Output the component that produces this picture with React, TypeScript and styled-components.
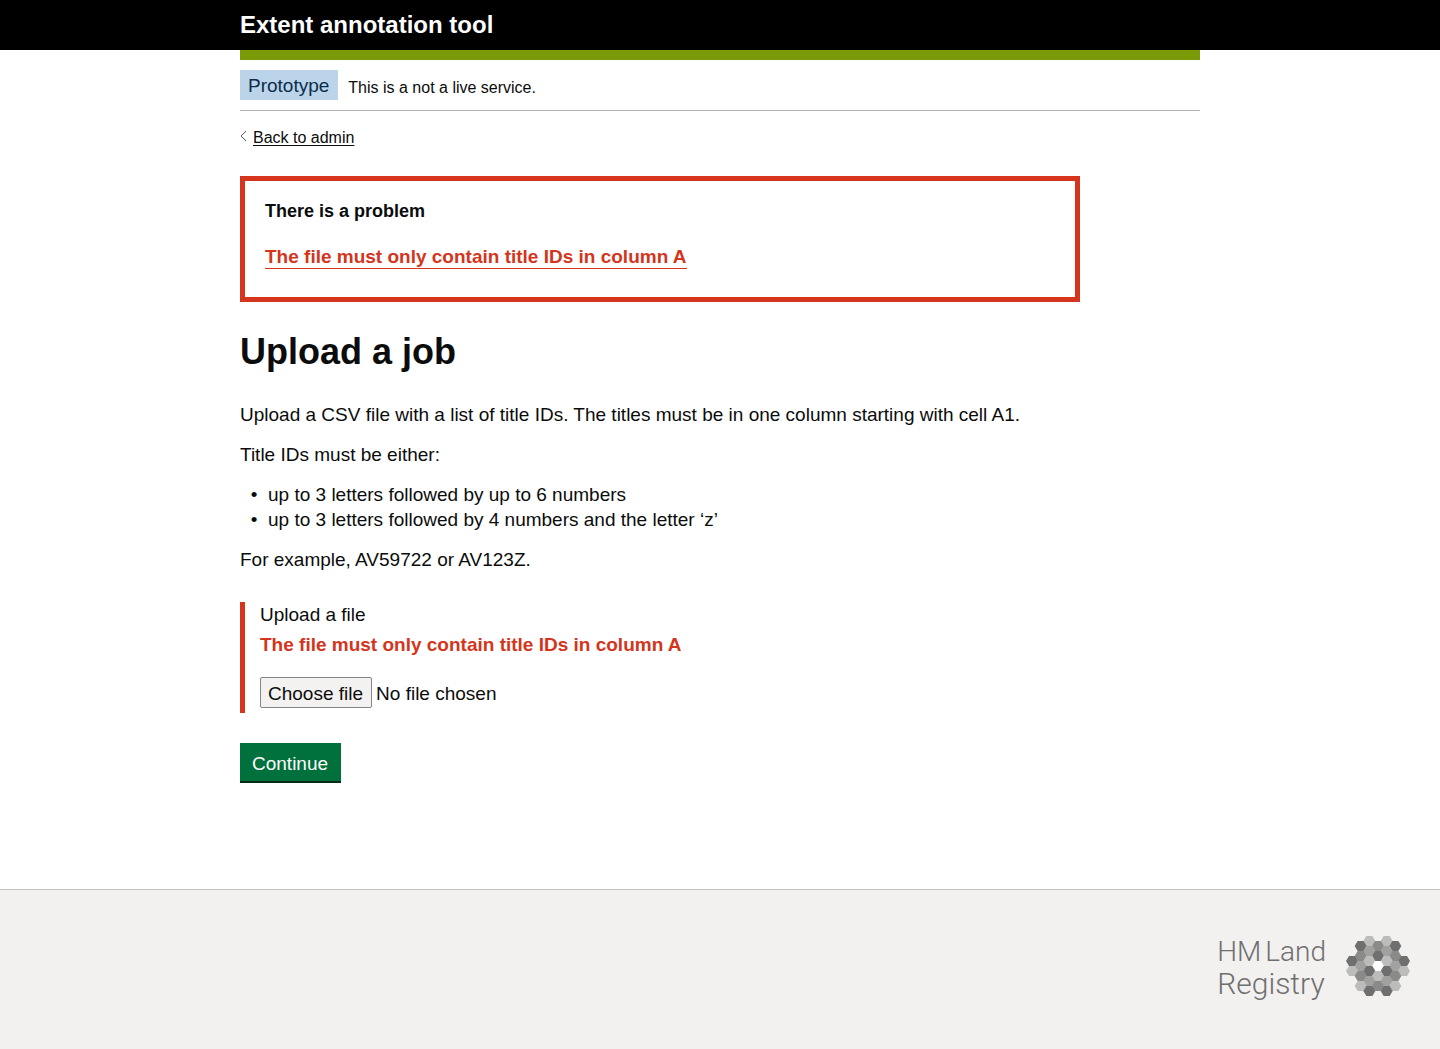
import React, { useState } from 'react';
import styled, { createGlobalStyle } from 'styled-components';

const RED = '#d4351c';
const INK = '#0b0c0c';

const GlobalStyle = createGlobalStyle`
  * { box-sizing: border-box; }
  body {
    margin: 0;
    background: #fff;
    color: ${INK};
    font-family: "Liberation Sans", Arial, sans-serif;
    font-size: 19px;
    line-height: 25px;
  }
`;

const Page = styled.div`
  display: flex;
  flex-direction: column;
  min-height: 100vh;
`;

const Container = styled.div`
  width: 100%;
  max-width: 1020px;
  margin: 0 auto;
  padding: 0 30px;
`;

const Header = styled.header`
  background: #000;
  color: #fff;
`;

const ServiceName = styled.div`
  padding: 10px 0;
  font-size: 24px;
  line-height: 30px;
  font-weight: 700;
`;

const AccentBar = styled.div`
  height: 10px;
  background: #7a9a08;
`;

const PhaseBanner = styled.div`
  display: flex;
  align-items: center;
  gap: 10px;
  padding: 10px 0;
  border-bottom: 1px solid #b1b4b6;
`;

const Tag = styled.strong`
  padding: 3px 9px 2px 8px;
  background: #bbd4ea;
  color: #0c2d4a;
  font-weight: 400;
`;

const PhaseText = styled.span`
  padding-top: 5px;
  font-size: 16px;
`;

const BackLink = styled.a`
  display: inline-flex;
  align-items: center;
  gap: 6px;
  margin-top: 14px;
  color: ${INK};
  font-size: 16px;
  line-height: 25px;
  text-decoration: none;

  svg { margin-bottom: 4px; }
  span {
    text-decoration: underline;
    text-decoration-thickness: 1px;
    text-underline-offset: 2px;
  }
`;

const Main = styled.main`
  flex: 1;
  padding: 26px 0 108px;
`;

const ErrorSummary = styled.section`
  max-width: 840px;
  padding: 20px;
  border: 5px solid ${RED};
`;

const ErrorHeading = styled.h2`
  margin: 0 0 23px;
  font-size: 18px;
  line-height: 20px;
`;

const ErrorLink = styled.a`
  display: inline-block;
  margin-bottom: 8px;
  border-bottom: 1px solid ${RED};
  color: ${RED};
  font-weight: 700;
  line-height: 22px;
  text-decoration: none;
`;

const Title = styled.h1`
  margin: 30px 0;
  font-size: 36px;
  line-height: 40px;
`;

const Text = styled.p`
  max-width: 840px;
  margin: 0 0 15px;
`;

const Rules = styled.ul`
  margin: 0 0 15px;
  padding-left: 28px;
  list-style-type: "•  ";
`;

const FormGroup = styled.div`
  display: flex;
  flex-direction: column;
  margin: 30px 0;
  padding: 0 0 5px 15px;
  border-left: 5px solid ${RED};
`;

const ErrorMessage = styled.p`
  margin: 5px 0 20px;
  color: ${RED};
  font-weight: 700;
`;

const FilePicker = styled.div`
  display: flex;
  align-items: center;
  gap: 4px;
`;

const FileInput = styled.input`
  position: absolute;
  width: 1px;
  height: 1px;
  overflow: hidden;
  clip-path: inset(50%);

  &:focus-visible + label { outline: 3px solid #ffdd00; }
`;

const FileButton = styled.label`
  padding: 3px 8px 1px 7px;
  border: 1px solid #858585;
  border-radius: 2px;
  background: #f3f2f1;
`;

const FileName = styled.span`
  padding-top: 2px;
`;

const Button = styled.button`
  padding: 8px 13px 5px 12px;
  border: 0;
  border-radius: 0;
  background: #00703c;
  box-shadow: 0 2px 0 #002d18;
  color: #fff;
  font: inherit;
  cursor: pointer;
`;

const Footer = styled.footer`
  display: flex;
  justify-content: flex-end;
  padding: 42px 30px 49px;
  border-top: 1px solid #bfc1c3;
  background: #f2f1ef;
`;

const Logo = styled.div`
  display: flex;
  align-items: center;
  gap: 20px;
`;

const Wordmark = styled.div`
  padding-top: 4px;
  color: #706f6f;
  font-family: Roboto, sans-serif;
  font-weight: 300;
  line-height: 32px;
`;

const WordmarkLine = styled.div<{ $size: number }>`
  display: flex;
  gap: 4px;
  font-size: ${({ $size }) => $size}px;
`;

const palette = ['#706f6f', '#8a8a89', '#a1a1a0', '#bcbcbb', '#ffffff'];

// Centre x, centre y and palette index of each cell in the emblem.
const cells: [number, number, number][] = [
  [70, 15, 3], [122, 15, 3],
  [44, 30, 0], [96, 30, 1], [148, 30, 0],
  [70, 45, 2], [122, 45, 2],
  [44, 60, 1], [96, 60, 0], [148, 60, 1],
  [18, 75, 0], [70, 75, 3], [122, 75, 3], [174, 75, 0],
  [44, 90, 2], [96, 90, 4], [148, 90, 2],
  [18, 105, 3], [70, 105, 0], [122, 105, 0], [174, 105, 3],
  [44, 120, 1], [96, 120, 3], [148, 120, 1],
  [70, 135, 2], [122, 135, 2],
  [44, 150, 3], [96, 150, 1], [148, 150, 3],
  [70, 165, 0], [122, 165, 0],
];

const hexagon = (x: number, y: number) =>
  [[-18, 0], [-9, -15], [9, -15], [18, 0], [9, 15], [-9, 15]]
    .map(([dx, dy]) => `${x + dx},${y + dy}`)
    .join(' ');

const Emblem = () => (
  <svg width="64" height="60" viewBox="0 0 192 180" aria-hidden="true">
    {cells.map(([x, y, tone]) => (
      <polygon key={`${x}-${y}`} points={hexagon(x, y)} fill={palette[tone]} />
    ))}
  </svg>
);

export default function App() {
  const [fileName, setFileName] = useState('No file chosen');

  return (
    <>
      <GlobalStyle />
      <Page>
        <Header>
          <Container>
            <ServiceName>Extent annotation tool</ServiceName>
          </Container>
        </Header>
        <Container>
          <AccentBar />
          <PhaseBanner>
            <Tag>Prototype</Tag>
            <PhaseText>This is a not a live service.</PhaseText>
          </PhaseBanner>
          <BackLink href="#admin">
            <svg width="7" height="12" viewBox="0 0 7 12" fill="none" stroke="#505a5f" aria-hidden="true">
              <path d="M6 1 1 6l5 5" />
            </svg>
            <span>Back to admin</span>
          </BackLink>
          <Main>
            <ErrorSummary aria-labelledby="error-title">
              <ErrorHeading id="error-title">There is a problem</ErrorHeading>
              <ErrorLink href="#file">The file must only contain title IDs in column A</ErrorLink>
            </ErrorSummary>
            <Title>Upload a job</Title>
            <Text>
              Upload a CSV file with a list of title IDs. The titles must be in one column starting with cell A1.
            </Text>
            <Text>Title IDs must be either:</Text>
            <Rules>
              <li>up to 3 letters followed by up to 6 numbers</li>
              <li>up to 3 letters followed by 4 numbers and the letter ‘z’</li>
            </Rules>
            <Text>For example, AV59722 or AV123Z.</Text>
            <form onSubmit={(event) => event.preventDefault()}>
              <FormGroup>
                <label htmlFor="file">Upload a file</label>
                <ErrorMessage id="file-error">The file must only contain title IDs in column A</ErrorMessage>
                <FilePicker>
                  <FileInput
                    id="file"
                    type="file"
                    accept=".csv"
                    aria-describedby="file-error"
                    onChange={(event) => setFileName(event.target.files?.[0]?.name ?? 'No file chosen')}
                  />
                  <FileButton htmlFor="file">Choose file</FileButton>
                  <FileName>{fileName}</FileName>
                </FilePicker>
              </FormGroup>
              <Button type="submit">Continue</Button>
            </form>
          </Main>
        </Container>
        <Footer>
          <Logo>
            <Wordmark>
              <WordmarkLine $size={28}>
                <span>HM</span>
                <span>Land</span>
              </WordmarkLine>
              <WordmarkLine $size={30}>Registry</WordmarkLine>
            </Wordmark>
            <Emblem />
          </Logo>
        </Footer>
      </Page>
    </>
  );
}
